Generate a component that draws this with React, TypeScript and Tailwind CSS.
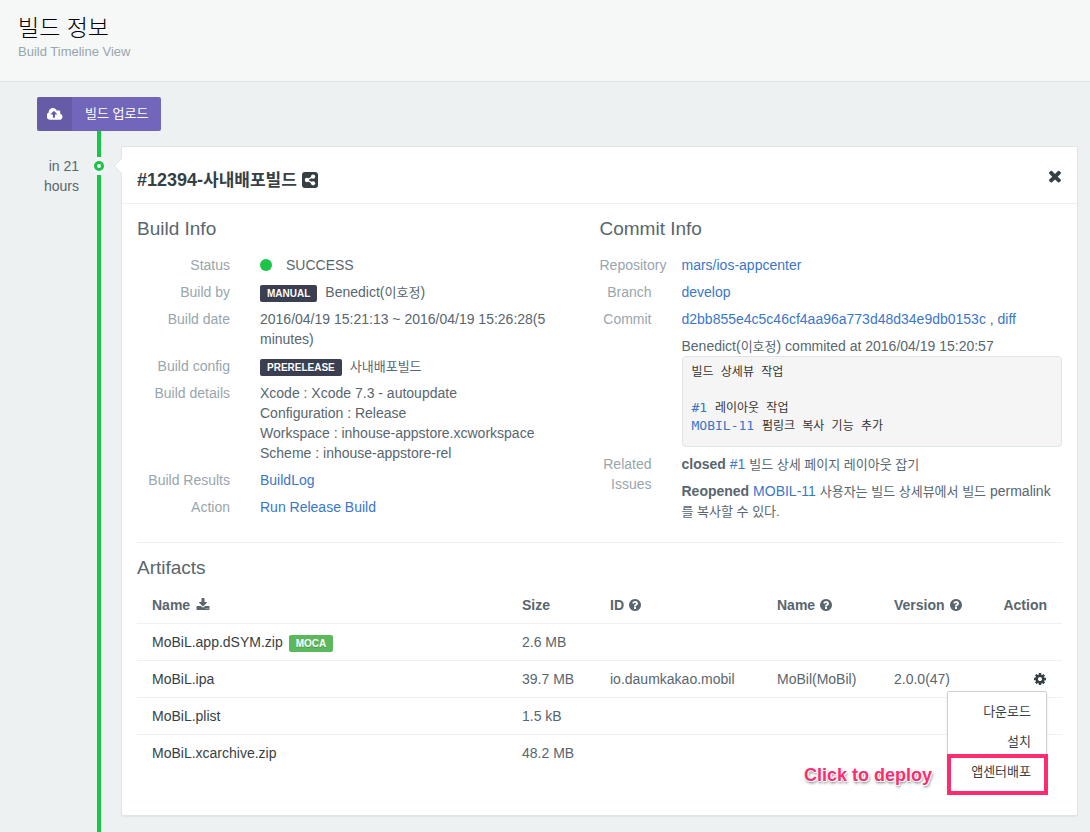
import type { ReactNode } from "react";

const ICONS = {
  cloud: {
    box: "0 0 1920 1792",
    d: "M1216 864q0-14-9-23l-352-352q-9-9-23-9t-23 9l-351 351q-10 12-10 24 0 14 9 23t23 9h224v352q0 13 9.5 22.5t22.5 9.5h192q13 0 22.5-9.5t9.5-22.5v-352h224q13 0 22.5-9.5t9.5-22.5zm640 288q0 159-112.5 271.5t-271.5 112.5h-1088q-185 0-316.5-131.5t-131.5-316.5q0-130 70-240t188-165q-2-30-2-43 0-212 150-362t362-150q156 0 285.5 87t188.5 231q71-62 166-62 106 0 181 75t75 181q0 76-41 138 130 31 213.5 135.5t83.5 238.5z",
  },
  times: {
    box: "0 0 1792 1792",
    d: "M1490 1322q0 40-28 68l-136 136q-28 28-68 28t-68-28l-294-294-294 294q-28 28-68 28t-68-28l-136-136q-28-28-28-68t28-68l294-294-294-294q-28-28-28-68t28-68l136-136q28-28 68-28t68 28l294 294 294-294q28-28 68-28t68 28l136 136q28 28 28 68t-28 68l-294 294 294 294q28 28 28 68z",
  },
  download: {
    box: "0 0 1792 1792",
    d: "M1344 1344q0-26-19-45t-45-19-45 19-19 45 19 45 45 19 45-19 19-45zm256 0q0-26-19-45t-45-19-45 19-19 45 19 45 45 19 45-19 19-45zm128-224v320q0 40-28 68t-68 28h-1472q-40 0-68-28t-28-68v-320q0-40 28-68t68-28h465l135 136q58 56 136 56t136-56l136-136h464q40 0 68 28t28 68zm-325-569q17 41-14 70l-448 448q-18 19-45 19t-45-19l-448-448q-31-29-14-70 17-39 59-39h256v-448q0-26 19-45t45-19h256q26 0 45 19t19 45v448h256q42 0 59 39z",
  },
  question: {
    box: "0 0 1792 1792",
    d: "M1024 1376v-192q0-14-9-23t-23-9h-192q-14 0-23 9t-9 23v192q0 14 9 23t23 9h192q14 0 23-9t9-23zm256-672q0-88-55.5-163t-138.5-116-170-41q-243 0-371 213-15 24 8 42l132 100q7 6 19 6 16 0 25-12 53-68 86-92 34-24 86-24 48 0 85.5 26t37.5 59q0 38-20 61t-68 45q-63 28-115.5 86.5t-52.5 125.5v36q0 14 9 23t23 9h192q14 0 23-9t9-23q0-19 21.5-49.5t54.5-49.5q32-18 49-28.5t46-35 44.5-48 28-60.5 12.5-81zm384 192q0 209-103 385.5t-279.5 279.5-385.5 103-385.5-103-279.5-279.5-103-385.5 103-385.5 279.5-279.5 385.5-103 385.5 103 279.5 279.5 103 385.5z",
  },
  cog: {
    box: "0 0 1792 1792",
    d: "M1152 896q0-106-75-181t-181-75-181 75-75 181 75 181 181 75 181-75 75-181zm512-109v222q0 12-8 23t-20 13l-185 28q-19 54-39 91 35 50 107 138 10 12 10 25t-9 23q-27 37-99 108t-94 71q-12 0-26-9l-138-108q-44 23-91 38-16 136-29 186-7 28-36 28h-222q-14 0-24.5-8.5t-11.5-21.5l-28-184q-49-16-90-37l-141 107q-10 9-25 9-14 0-25-11-126-114-165-168-7-10-7-23 0-12 8-23 15-21 51-66.5t54-70.5q-27-50-41-99l-183-27q-13-2-21-12.5t-8-23.5v-222q0-12 8-23t19-13l186-28q14-46 39-92-40-57-107-138-10-12-10-24 0-10 9-23 26-36 98.5-107.5t94.5-71.5q13 0 26 10l138 107q44-23 91-38 16-136 29-186 7-28 36-28h222q14 0 24.5 8.5t11.5 21.5l28 184q49 16 90 37l142-107q9-9 24-9 13 0 25 10 129 119 165 170 7 8 7 22 0 12-8 23-15 21-51 66.5t-54 70.5q26 50 41 98l183 28q13 2 21 12.5t8 23.5z",
  },
};

function Icon({ name, className }: { name: keyof typeof ICONS; className: string }) {
  return (
    <svg aria-hidden="true" viewBox={ICONS[name].box} fill="currentColor" className={className}>
      <path d={ICONS[name].d} />
    </svg>
  );
}

function ShareIcon() {
  return (
    <svg aria-hidden="true" viewBox="0 0 15 15" className="size-4">
      <rect width="15" height="15" rx="2.8" fill="currentColor" />
      <path d="M10.3 4.4 4.7 7.5l5.6 3.1" fill="none" stroke="#fff" strokeWidth="1.3" />
      <g fill="#fff">
        <circle cx="10.4" cy="4.4" r="2" />
        <circle cx="4.6" cy="7.5" r="2" />
        <circle cx="10.4" cy="10.6" r="2" />
      </g>
    </svg>
  );
}

function Ko({ children }: { children: ReactNode }) {
  return <span className="text-[13px]/[16px]">{children}</span>;
}

function Link({ children }: { children: ReactNode }) {
  return (
    <a href="#" className="text-[#3b76c9]">
      {children}
    </a>
  );
}

function Badge({ children, green = false }: { children: ReactNode; green?: boolean }) {
  return (
    <span
      className={`rounded-xs px-[7px] text-[10px]/[17px] font-bold text-white [text-shadow:0_1px_0_rgba(0,0,0,0.2)] ${
        green ? "bg-[#5cb85c]" : "bg-[#3a3f51]"
      }`}
    >
      {children}
    </span>
  );
}

function BuildRow({ label, children }: { label: string; children: ReactNode }) {
  return (
    <div className="flex gap-[30px]">
      <dt className="w-[93px] shrink-0 text-right text-[#98a6ad]">{label}</dt>
      <dd className="min-w-0 flex-1">{children}</dd>
    </div>
  );
}

function CommitRow({ label, children }: { label: string; children: ReactNode }) {
  return (
    <div className="flex gap-[30px]">
      <dt className="w-[52px] shrink-0 text-right text-[#98a6ad]">{label}</dt>
      <dd className="flex min-w-0 flex-1 flex-col gap-[7px]">{children}</dd>
    </div>
  );
}

function HelpHeading({ children }: { children: ReactNode }) {
  return (
    <span className="flex items-center gap-1">
      {children}
      <Icon name="question" className="size-[14px]" />
    </span>
  );
}

function ActionMenu() {
  return (
    <div className="absolute top-full right-0 z-10 mt-0.5 w-[100px] rounded-xs border border-[#cfd3d6] bg-white py-[5px] text-[13px]/[30px] text-[#363f44] shadow-sm">
      <button type="button" className="block w-full pr-[15px] text-right">다운로드</button>
      <button type="button" className="block w-full pr-[15px] text-right">설치</button>
      <div className="relative">
        <button type="button" className="block w-full pr-[15px] text-right">앱센터배포</button>
        <div className="pointer-events-none absolute -top-[3px] -right-[2px] -bottom-2 -left-px border-4 border-[#fe2c6e]" />
        <span className="absolute top-[3px] right-full mr-4 text-lg/[30px] font-bold whitespace-nowrap text-[#fe2c6e] [text-shadow:1px_0_0_#fff,-1px_0_0_#fff,0_1px_0_#fff,0_-1px_0_#fff,1px_1px_0_#fff,-1px_-1px_0_#fff,1px_2px_3px_rgba(0,0,0,0.6)]">
          Click to deploy
        </span>
      </div>
    </div>
  );
}

const artifacts = [
  { file: "MoBiL.app.dSYM.zip", size: "2.6 MB", moca: true },
  { file: "MoBiL.ipa", size: "39.7 MB", id: "io.daumkakao.mobil", name: "MoBil(MoBil)", version: "2.0.0(47)", menu: true },
  { file: "MoBiL.plist", size: "1.5 kB" },
  { file: "MoBiL.xcarchive.zip", size: "48.2 MB" },
];

export default function App() {
  return (
    <div className="flex min-h-screen flex-col bg-[#edf1f2] font-['Liberation_Sans','Noto_Sans_CJK_KR',sans-serif] text-sm/[20px] text-[#58666e]">
      <header className="border-b border-[#dee5e7] bg-[#f6f8f8] px-[18px] pt-[14px] pb-[19px]">
        <h1 className="text-[23px]/[28px] font-light text-black">빌드 정보</h1>
        <p className="text-[13px]/[20px] text-[#98a6ad]">Build Timeline View</p>
      </header>

      <main className="flex flex-1 flex-col pt-[15px]">
        <div className="px-[37px]">
          <button type="button" className="flex h-[34px] items-center overflow-hidden rounded-xs bg-[#7266ba] text-[13px] text-white">
            <span className="flex h-full w-[35px] items-center justify-center bg-black/10">
              <Icon name="cloud" className="h-[15px] w-4" />
            </span>
            <span className="px-[13px]">빌드 업로드</span>
          </button>
        </div>
        <div className="ml-[79px] flex w-10 justify-center">
          <div className="h-[15px] w-1 bg-[#1bc548]" />
        </div>

        <div className="flex flex-1">
          <time className="w-[79px] pt-[10px] pl-10 text-right">in 21 hours</time>
          <div className="mr-[2px] flex w-10 flex-col items-center">
            <div className="h-[11px] w-1 bg-[#1bc548]" />
            <div className="flex size-[18px] items-center justify-center rounded-full bg-[#f1f4f5]">
              <div className="size-[10px] rounded-full border-3 border-[#1bc548] bg-white" />
            </div>
            <div className="w-1 flex-1 bg-[#1bc548]" />
          </div>

          <section className="relative mr-3 mb-4 min-w-0 flex-1 self-start rounded-xs border border-[#dee5e7] bg-white pb-[44px] shadow-[0_1px_1px_rgba(0,0,0,0.05)]">
            <svg aria-hidden="true" viewBox="0 0 8 16" className="absolute top-[11px] -left-2 h-4 w-2">
              <path d="M8 0 0 8l8 8z" fill="#fff" />
              <path d="M8 0 0 8l8 8" fill="none" stroke="#dee5e7" />
            </svg>

            <header className="flex items-start justify-between border-b border-[#edf1f2] pt-5 pr-[13px] pb-2.5 pl-[15px]">
              <h2 className="flex items-center gap-[5px] text-lg/[26px] font-bold text-[#363f44]">
                <span>
                  #12394-<span className="text-[17px]/[22px]">사내배포빌드</span>
                </span>
                <button type="button" aria-label="Share">
                  <ShareIcon />
                </button>
              </h2>
              <button type="button" aria-label="Close" className="text-[#363f44]">
                <Icon name="times" className="size-[18px]" />
              </button>
            </header>

            <div className="px-[15px] pt-[14px]">
              <div className="grid grid-cols-2 border-b border-[#edf1f2] pb-[21px]">
                <div>
                  <h3 className="mb-[15px] text-[19px]/[22px]">Build Info</h3>
                  <dl className="flex flex-col gap-[7px] pr-[30px]">
                    <BuildRow label="Status">
                      <span className="flex items-center gap-[14px]">
                        <span className="size-3 rounded-full bg-[#1bc548]" />
                        SUCCESS
                      </span>
                    </BuildRow>
                    <BuildRow label="Build by">
                      <span className="flex items-end gap-2">
                        <Badge>MANUAL</Badge>
                        <span>Benedict(<Ko>이호정</Ko>)</span>
                      </span>
                    </BuildRow>
                    <BuildRow label="Build date">2016/04/19 15:21:13 ~ 2016/04/19 15:26:28(5 minutes)</BuildRow>
                    <BuildRow label="Build config">
                      <span className="flex items-end gap-2">
                        <Badge>PRERELEASE</Badge>
                        <span><Ko>사내배포빌드</Ko></span>
                      </span>
                    </BuildRow>
                    <BuildRow label="Build details">
                      <p>Xcode : Xcode 7.3 - autoupdate</p>
                      <p>Configuration : Release</p>
                      <p>Workspace : inhouse-appstore.xcworkspace</p>
                      <p>Scheme : inhouse-appstore-rel</p>
                    </BuildRow>
                    <BuildRow label="Build Results"><Link>BuildLog</Link></BuildRow>
                    <BuildRow label="Action"><Link>Run Release Build</Link></BuildRow>
                  </dl>
                </div>

                <div>
                  <h3 className="mb-[15px] text-[19px]/[22px]">Commit Info</h3>
                  <dl className="flex flex-col gap-[7px]">
                    <CommitRow label="Repository"><Link>mars/ios-appcenter</Link></CommitRow>
                    <CommitRow label="Branch"><Link>develop</Link></CommitRow>
                    <CommitRow label="Commit">
                      <p>
                        <Link>d2bb855e4c5c46cf4aa96a773d48d34e9db0153c</Link> , <Link>diff</Link>
                      </p>
                      <div>
                        <p>Benedict(<Ko>이호정</Ko>) commited at 2016/04/19 15:20:57</p>
                        <pre className="rounded-sm border border-[#dee5e7] bg-[#f5f5f5] px-[9px] pt-1.5 pb-[11px] font-['DejaVu_Sans_Mono','Noto_Sans_CJK_KR',monospace] text-[13px]/[18px] text-[#333]">
                          <span className="text-xs/[16px]">빌드 상세뷰 작업</span>
                          {"\n\n"}
                          <Link>#1</Link> <span className="text-xs/[16px]">레이아웃 작업</span>
                          {"\n"}
                          <Link>MOBIL-11</Link> <span className="text-xs/[16px]">펌링크 복사 기능 추가</span>
                        </pre>
                      </div>
                    </CommitRow>
                    <CommitRow label="Related Issues">
                      <p>
                        <b>closed</b> <Link>#1</Link> <Ko>빌드 상세 페이지 레이아웃 잡기</Ko>
                      </p>
                      <p>
                        <b>Reopened</b> <Link>MOBIL-11</Link> <Ko>사용자는 빌드 상세뷰에서 빌드</Ko> permalink
                        <Ko>를 복사할 수 있다.</Ko>
                      </p>
                    </CommitRow>
                  </dl>
                </div>
              </div>

              <h3 className="mt-[14px] mb-[9px] text-[19px]/[22px]">Artifacts</h3>
              <table className="w-full table-fixed border-collapse text-left">
                <thead>
                  <tr className="h-[35px] border-b border-[#edf1f2]">
                    <th className="w-[40%] px-[15px]">
                      <span className="flex items-center gap-1.5">
                        Name
                        <Icon name="download" className="size-[14px]" />
                      </span>
                    </th>
                    <th className="w-[88px] px-[15px]">Size</th>
                    <th className="w-[167px] px-[15px]"><HelpHeading>ID</HelpHeading></th>
                    <th className="w-[117px] px-[15px]"><HelpHeading>Name</HelpHeading></th>
                    <th className="px-[15px]">
                      <span className="flex justify-between">
                        <HelpHeading>Version</HelpHeading>
                        <span>Action</span>
                      </span>
                    </th>
                  </tr>
                </thead>
                <tbody>
                  {artifacts.map((a) => (
                    <tr key={a.file} className="h-[37px] border-b border-[#edf1f2] last:border-b-0">
                      <td className="px-[15px] text-[#363f44]">
                        <span className="flex items-end gap-1.5">
                          {a.file}
                          {a.moca && <Badge green>MOCA</Badge>}
                        </span>
                      </td>
                      <td className="pl-[15px] whitespace-nowrap">{a.size}</td>
                      <td className="px-[15px]">{a.id}</td>
                      <td className="px-[15px]">{a.name}</td>
                      <td className="px-[15px]">
                        {a.menu && (
                          <div className="relative flex items-center justify-between">
                            <span>{a.version}</span>
                            <button type="button" aria-label="Actions" className="text-[#363f44]">
                              <Icon name="cog" className="size-[14px]" />
                            </button>
                            <ActionMenu />
                          </div>
                        )}
                      </td>
                    </tr>
                  ))}
                </tbody>
              </table>
            </div>
          </section>
        </div>
      </main>
    </div>
  );
}
